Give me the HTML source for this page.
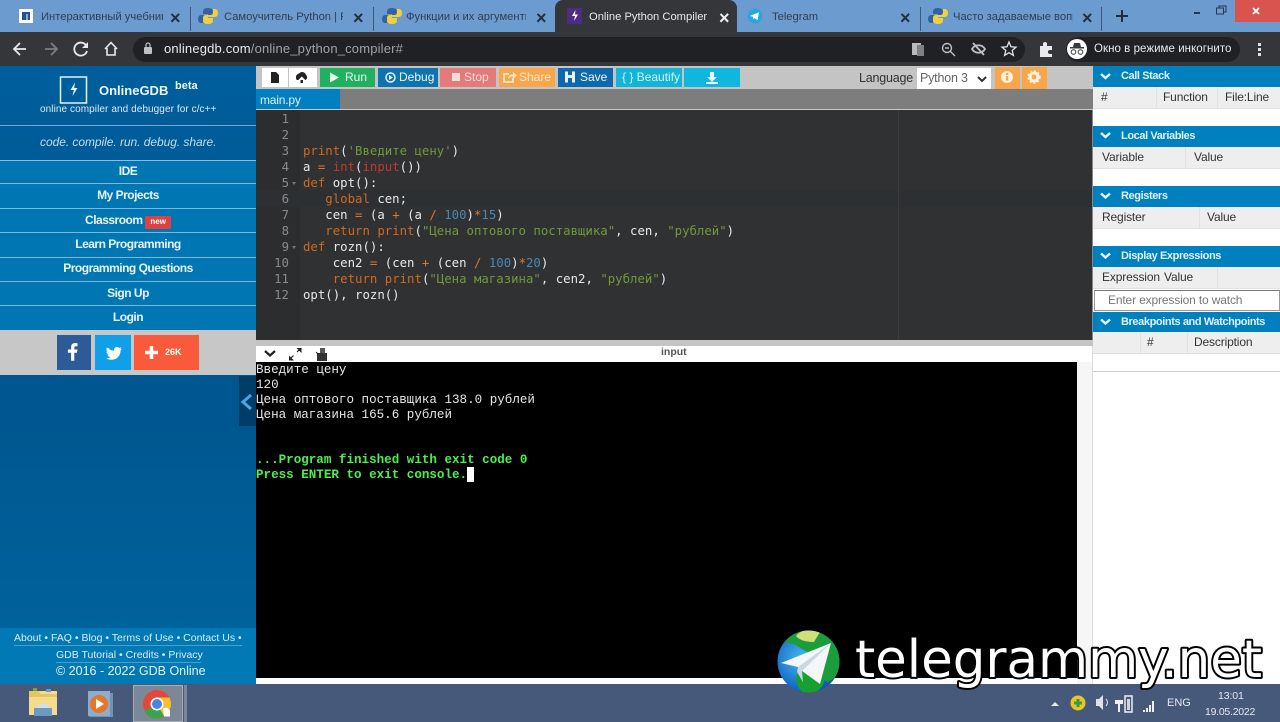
<!DOCTYPE html>
<html><head><meta charset="utf-8"><style>
html,body{margin:0;padding:0;width:1280px;height:722px;overflow:hidden;background:#fff;font-family:"Liberation Sans",sans-serif}
#r{position:relative;width:1280px;height:722px;overflow:hidden}
.b{position:absolute}
.t{position:absolute;white-space:pre;line-height:16px}
.tab{font-size:11.200px;color:#2f3f55;overflow:hidden}
.x{position:absolute;font-size:18px;font-weight:bold;color:#22303f;line-height:16px;width:10px;text-align:center}
.m{position:absolute;left:0;width:256px;background:#0077b3;border-bottom:1px solid #7fb5d5;color:#e8f3fa;font-size:12px;font-weight:bold;text-align:center;letter-spacing:-.5px}
.btn{position:absolute;top:68px;height:19px;color:#f2f2f2;font-size:12px;line-height:19px;white-space:pre}
.rh{position:absolute;left:1093px;width:187px;height:21px;background:#0080bf;color:#e2f0f8;font-size:11px;font-weight:bold;line-height:21px;letter-spacing:-.4px}
.rr{position:absolute;left:1093px;width:187px;height:21px;background:#eeeeee;border-bottom:1px solid #e0e0e0;color:#333;font-size:12px;line-height:21px;letter-spacing:-.15px}
.rr i{position:absolute;top:0;width:1px;height:21px;background:#e2e2e2}
.rr span,.rh span{position:absolute}
.code{position:absolute;left:303px;font:12.35px/16px "DejaVu Sans Mono","Noto Sans CJK SC",monospace;white-space:pre;color:#e8e8e8}
.n{position:absolute;left:256px;width:33px;text-align:right;font:12.35px/16px "DejaVu Sans Mono",monospace;color:#8a8c88}
.o{color:#d2691e}.r{color:#c03a2b}.g{color:#6f9a3a}.u{color:#4a87b5}.k{color:#e0762a}
.c{position:absolute;left:256px;font:12.57px/15px "Liberation Mono","DejaVu Sans Mono",monospace;white-space:pre;color:#e6e6e6}
.cg{color:#4cf04c;font-weight:bold}
</style></head><body><div id="r">

<!-- chrome tabs -->
<div class="b" style="left:0;top:0;width:1280px;height:32px;background:#6c9bd0"></div>
<div class="b" style="left:555px;top:0;width:182px;height:32px;background:#35363a;border-radius:8px 8px 0 0"></div>
<div class="b" style="left:190px;top:7px;width:1px;height:24px;background:#41597a"></div>
<div class="b" style="left:373px;top:7px;width:1px;height:24px;background:#41597a"></div>
<div class="b" style="left:920px;top:7px;width:1px;height:24px;background:#41597a"></div>
<div class="b" style="left:1101px;top:7px;width:1px;height:24px;background:#41597a"></div>

<svg class="b" style="left:0;top:0" width="1280" height="32">
<rect x="19" y="9" width="14" height="14" fill="#fff"/><path d="M22 12h8v8h-2.500v-6h-1v6H22z" fill="#23528f"/>
<g transform="translate(37 0)"><path d="M171 8c-4 0-5 1.500-5 4v2h5v1h-7c-2 0-3 2-3 4s1 4 3 4h2v-3c0-2 1-3 3-3h4c2 0 3-1 3-3v-2c0-3-2-4-5-4z" fill="#33639c"/><path d="M171 24c4 0 5-1.500 5-4v-2h-5v-1h7c2 0 3-2 3-4s-1-4-3-4h-2v3c0 2-1 3-3 3h-4c-2 0-3 1-3 3v2c0 3 2 4 5 4z" fill="#f2cf3f"/></g>
<g transform="translate(221 0)"><path d="M171 8c-4 0-5 1.500-5 4v2h5v1h-7c-2 0-3 2-3 4s1 4 3 4h2v-3c0-2 1-3 3-3h4c2 0 3-1 3-3v-2c0-3-2-4-5-4z" fill="#33639c"/><path d="M171 24c4 0 5-1.500 5-4v-2h-5v-1h7c2 0 3-2 3-4s-1-4-3-4h-2v3c0 2-1 3-3 3h-4c-2 0-3 1-3 3v2c0 3 2 4 5 4z" fill="#f2cf3f"/></g>
<g transform="translate(767 0)"><path d="M171 8c-4 0-5 1.500-5 4v2h5v1h-7c-2 0-3 2-3 4s1 4 3 4h2v-3c0-2 1-3 3-3h4c2 0 3-1 3-3v-2c0-3-2-4-5-4z" fill="#33639c"/><path d="M171 24c4 0 5-1.500 5-4v-2h-5v-1h7c2 0 3-2 3-4s-1-4-3-4h-2v3c0 2-1 3-3 3h-4c-2 0-3 1-3 3v2c0 3 2 4 5 4z" fill="#f2cf3f"/></g>
<rect x="567" y="8" width="15" height="16" fill="#4b2d83"/><path d="M575.500 10l-3.500 6h3l-1 5 4-6.500h-3z" fill="#fff"/>
<circle cx="755" cy="16" r="7.500" fill="#2aa6dc"/><path d="M750 16l9-3.800-1.500 8-3-2.200-1.200 1.300-.3-2.500z" fill="#fff"/>
<path d="M1116 16h12M1122 10v12" stroke="#1e2c40" stroke-width="2"/>
<path d="M1194 13h6" stroke="#26364c" stroke-width="2"/>
<rect x="1219" y="6" width="7" height="6" fill="none" stroke="#26364c"/><rect x="1216.500" y="8" width="7" height="6" fill="#6c9bd0" stroke="#26364c"/>
<rect x="1235" y="0" width="45" height="22" fill="#d9534f"/>
<path d="M1253 8l6 6M1259 8l-6 6" stroke="#fff" stroke-width="1.800"/>
</svg>
<div class="t tab" style="left:41px;top:9px;width:122px">Интерактивный учебник</div>
<div class="t tab" style="left:224px;top:9px;width:119px">Самоучитель Python | Python</div>
<div class="t tab" style="left:406px;top:9px;width:120px">Функции и их аргументы</div>
<div class="t" style="left:589px;top:9px;font-size:11.200px;color:#e6e8ea;width:120px;overflow:hidden">Online Python Compiler</div>
<div class="t tab" style="left:772px;top:9px">Telegram</div>
<div class="t tab" style="left:953px;top:9px;width:120px">Часто задаваемые вопросы</div>
<div class="x" style="left:170px;top:10px">×</div>
<div class="x" style="left:353px;top:10px">×</div>
<div class="x" style="left:536px;top:10px">×</div>
<div class="x" style="left:719px;top:10px;color:#eee">×</div>
<div class="x" style="left:900px;top:10px">×</div>
<div class="x" style="left:1082px;top:10px">×</div>

<!-- chrome toolbar -->
<div class="b" style="left:0;top:32px;width:1280px;height:34px;background:#35363a"></div>
<div class="b" style="left:133px;top:37px;width:892px;height:25px;background:#202124;border-radius:13px"></div>
<div class="b" style="left:1066px;top:37px;width:174px;height:25px;background:#202124;border-radius:13px"></div>
<svg class="b" style="left:0;top:32px" width="1280" height="34">
<path d="M26 17H15M20 11l-6 6 6 6" fill="none" stroke="#e8eaed" stroke-width="1.800"/>
<path d="M45 17h11M51 11l6 6-6 6" fill="none" stroke="#7c7e82" stroke-width="1.800"/>
<path d="M86.500 14a6.500 6.500 0 1 0 .5 5" fill="none" stroke="#e8eaed" stroke-width="1.800"/><path d="M88 10v6h-6z" fill="#e8eaed"/>
<path d="M105 17l6-6.500 6 6.500M107 16v7h8v-7" fill="none" stroke="#e8eaed" stroke-width="1.600"/>
<rect x="144" y="15" width="8" height="7" rx="1" fill="#bfc1c4"/><path d="M146 15v-2a2 2 0 0 1 4 0v2" fill="none" stroke="#bfc1c4" stroke-width="1.200"/>
<rect x="912" y="11" width="9" height="12" fill="#b9bbbe"/><rect x="917" y="13" width="7" height="11" fill="#7d8085"/>
<circle cx="947" cy="16" r="4.500" fill="none" stroke="#bfc1c4" stroke-width="1.400"/><path d="M950 19l5 5M945 16h4" stroke="#bfc1c4" stroke-width="1.400"/>
<path d="M972 17c3-5 10-5 13 0-3 5-10 5-13 0zM973 11l11 12" fill="none" stroke="#bfc1c4" stroke-width="1.800"/>
<path d="M1009 10l2 4.800 5 .4-3.800 3.200 1.200 5-4.400-2.700-4.400 2.700 1.200-5-3.800-3.200 5-.4z" fill="none" stroke="#e0e1e3" stroke-width="1.300"/>
<path d="M1040 14h3v-2a2 2 0 0 1 4 0v2h5v4h-2a2 2 0 0 0 0 4h2v3h-12z" fill="#e8eaed"/>
<circle cx="1077" cy="17" r="10" fill="#fff"/><path d="M1070 15h14v1.500h-14zM1073 15l1-4h6l1 4z" fill="#3a3b3f"/><circle cx="1073.500" cy="20" r="2.300" fill="none" stroke="#3a3b3f"/><circle cx="1080.500" cy="20" r="2.300" fill="none" stroke="#3a3b3f"/>
</svg>
<div class="t" style="left:164px;top:41px;font-size:13px;color:#e8eaed;letter-spacing:.17px">onlinegdb.com<span style="color:#a0a2a6">/online_python_compiler#</span></div>
<div class="t" style="left:1094px;top:41px;font-size:11.500px;color:#e8eaed;letter-spacing:.05px">Окно в режиме инкогнито</div>
<div class="b" style="left:1258px;top:43px;width:3px;height:3px;background:#dfe1e3"></div>
<div class="b" style="left:1258px;top:48px;width:3px;height:3px;background:#dfe1e3"></div>
<div class="b" style="left:1258px;top:53px;width:3px;height:3px;background:#dfe1e3"></div>

<!-- left sidebar -->
<div class="b" style="left:0;top:66px;width:256px;height:618px;background:linear-gradient(#005e9c,#00568f 55%,#00659f)"></div>
<svg class="b" style="left:0;top:66px" width="256" height="40">
<rect x="60.500" y="11" width="26" height="26" fill="none" stroke="#e6f0f7" stroke-width="1.500"/>
<path d="M75 16.500l-4.500 7.500h3.300l-1.300 6 5-8h-3.300z" fill="#e8f2f8"/>
</svg>
<div class="t" style="left:99px;top:83px;font-size:13px;font-weight:bold;color:#eef5fa">OnlineGDB</div>
<div class="t" style="left:175px;top:78px;font-size:11px;font-weight:bold;color:#eef5fa">beta</div>
<div class="t" style="left:40px;top:102px;font-size:10px;color:#dbe9f3;letter-spacing:.08px">online compiler and debugger for c/c++</div>
<div class="b" style="left:0;top:125px;width:256px;height:1px;background:#74a6c8"></div>
<div class="t" style="left:40px;top:134px;font-size:12px;font-style:italic;color:#c5dbe9;letter-spacing:-.05px">code. compile. run. debug. share.</div>
<div class="b" style="left:0;top:160px;width:256px;height:1px;background:#8fbcd8"></div>
<div class="m" style="top:161px;height:22px;line-height:20px">IDE</div>
<div class="m" style="top:184px;height:24px;line-height:23px">My Projects</div>
<div class="m" style="top:209px;height:23px;line-height:22px">Classroom <span style="display:inline-block;background:#df4141;color:#fff;font-size:8px;line-height:12px;height:13px;padding:0 5px;vertical-align:0;letter-spacing:0">new</span></div>
<div class="m" style="top:233px;height:24px;line-height:22px">Learn Programming</div>
<div class="m" style="top:258px;height:23px;line-height:21px">Programming Questions</div>
<div class="m" style="top:282px;height:23px;line-height:22px">Sign Up</div>
<div class="m" style="top:306px;height:24px;line-height:22px;border-bottom:0">Login</div>
<div class="b" style="left:0;top:330px;width:256px;height:45px;background:#c7c7c7"></div>
<div class="b" style="left:57px;top:335px;width:34px;height:35px;background:#2d5b98"></div>
<div class="b" style="left:95px;top:335px;width:36px;height:35px;background:#10a0ea"></div>
<div class="b" style="left:134px;top:335px;width:65px;height:35px;background:#fa5a3c"></div>
<svg class="b" style="left:57px;top:335px" width="142" height="35">
<path transform="translate(.5 3.300) scale(.8)" d="M17 28V18h-4v-4h4v-3c0-3.500 2-5 5-5h3v4h-2c-1.500 0-2 .7-2 2v2h4l-.7 4H21v10z" fill="#fff"/>
<path transform="translate(22.200 6) scale(.62)" d="M47 11c2.500 3 5.500 4.500 9 4.700-.5-3.500 2-6 5-6 1.400 0 2.700.6 3.500 1.500l3.500-1.200-1.800 3.300 2.800-.8-2.300 2.800c0 9-6.500 15-15 15-3 0-6-.8-8.500-2.400 2.700.2 5.300-.5 7.300-2.100-2.300 0-4.200-1.500-4.800-3.500h2.400c-2.500-.6-4.200-2.800-4.200-5.300.7.400 1.500.6 2.300.7-2.300-1.600-3-4.700-1.500-7z" fill="#fff"/>
<path d="M88 17.500h13M94.500 11v13" stroke="#fff" stroke-width="3.500"/>
</svg>
<div class="t" style="left:165px;top:345px;font-size:9px;font-weight:bold;color:#ffe;line-height:14px">26K</div>
<div class="b" style="left:239px;top:376px;width:17px;height:50px;background:#003c68"></div>
<svg class="b" style="left:239px;top:376px" width="17" height="50"><path d="M12 19l-8 7 8 7" fill="none" stroke="#4aa5e0" stroke-width="3"/></svg>

<div class="b" style="left:0;top:628px;width:256px;height:56px;background:#0079b5"></div>
<div class="t" style="left:14px;top:630px;font-size:10.500px;color:#dcecf6">About • FAQ • Blog • Terms of Use • Contact Us •</div>
<div class="b" style="left:14px;top:645px;width:228px;height:1px;background:#4aa0cd"></div>
<div class="t" style="left:56px;top:647px;font-size:10.500px;color:#dcecf6">GDB Tutorial • Credits • Privacy</div>
<div class="b" style="left:56px;top:662px;width:145px;height:1px;background:#4aa0cd"></div>
<div class="t" style="left:56px;top:663px;font-size:12.500px;color:#e8f3fa">© 2016 - 2022 GDB Online</div>

<!-- ide toolbar -->
<div class="b" style="left:256px;top:66px;width:837px;height:23px;background:#c4c4c4"></div>
<div class="b" style="left:262px;top:68px;width:26px;height:19px;background:#fff"></div>
<div class="b" style="left:289px;top:68px;width:28px;height:19px;background:#fff"></div>
<svg class="b" style="left:262px;top:68px" width="56" height="19">
<path d="M9 4h5l3 3v8H9z" fill="#222"/>
<path d="M34 9.500a3.500 3.500 0 0 1 3-4 4 4 0 0 1 7 1.500 3 3 0 0 1-.5 5H41v3h-2.500v-3H35a2.500 2.500 0 0 1-1-2.500z" fill="#222"/><path d="M39.800 8.500l-3.500 3.500h7z" fill="#fff"/>
</svg>
<div class="btn" style="left:320px;width:55px;background:#1fb160"><span style="position:absolute;left:25px;color:#f0f8f2">Run</span></div>
<svg class="b" style="left:320px;top:68px" width="24" height="19"><path d="M10 4.500l9 5-9 5z" fill="#eef8f0"/></svg>
<div class="btn" style="left:378px;width:60px;background:#0c74ae"><span style="position:absolute;left:21px">Debug</span></div>
<svg class="b" style="left:378px;top:68px" width="20" height="19"><circle cx="12.500" cy="9.500" r="4.500" fill="none" stroke="#eef" stroke-width="1.500"/><path d="M11 7l4 2.500-4 2.500z" fill="#eef"/></svg>
<div class="btn" style="left:440px;width:56px;background:#e47b7b"><span style="position:absolute;left:24px;color:#f6dcdc">Stop</span></div>
<div class="b" style="left:452px;top:73px;width:8px;height:8px;background:#f6dcdc"></div>
<div class="btn" style="left:499px;width:56px;background:#f8a64a"><span style="position:absolute;left:20px;color:#fde9d0">Share</span></div>
<svg class="b" style="left:499px;top:68px" width="20" height="19"><path d="M14 10v4H5V6h5" fill="none" stroke="#fde9d0" stroke-width="1.700"/><path d="M9 11c0-3 2-4.500 5-4.500V4l4 3.500-4 3.500V8.500c-2 0-3.500.7-5 2.500z" fill="#fde9d0"/></svg>
<div class="btn" style="left:558px;width:55px;background:#0c69ab"><span style="position:absolute;left:22px">Save</span></div>
<svg class="b" style="left:558px;top:68px" width="20" height="19"><path d="M7 3.500h10v11H7z" fill="#eef"/><rect x="10" y="3.500" width="4" height="3.500" fill="#0c69ab"/><rect x="10" y="10" width="4" height="4.500" fill="#0c69ab"/></svg>
<div class="btn" style="left:616px;width:66px;background:#12b5d8"><span style="position:absolute;left:6px;color:#d6f2f8">{ } Beautify</span></div>
<div class="btn" style="left:684px;width:56px;background:#0fb6de"></div>
<svg class="b" style="left:684px;top:68px" width="56" height="19"><path d="M26 4h4v5h3l-5 5-5-5h3zM22 14h12v2H22z" fill="#e8f7fb"/></svg>
<div class="t" style="left:859px;top:70px;font-size:12.500px;color:#333;letter-spacing:-.2px">Language</div>
<div class="b" style="left:917px;top:68px;width:74px;height:21px;background:#fff"></div>
<div class="t" style="left:920px;top:70px;font-size:12.500px;color:#666;letter-spacing:-.2px">Python 3</div>
<svg class="b" style="left:975px;top:72px" width="14" height="14"><path d="M3 5l4 4 4-4" fill="none" stroke="#333" stroke-width="2"/></svg>
<div class="b" style="left:995px;top:67px;width:25px;height:22px;background:#f8a64a"></div>
<div class="b" style="left:1022px;top:67px;width:25px;height:22px;background:#f8a64a"></div>
<svg class="b" style="left:995px;top:67px" width="52" height="22"><circle cx="12" cy="10" r="6" fill="#fdf0dc"/><rect x="11" y="9" width="2.200" height="4.500" fill="#f8a64a"/><rect x="11" y="6" width="2.200" height="2" fill="#f8a64a"/><circle cx="39" cy="10" r="4" fill="none" stroke="#fdf0dc" stroke-width="3"/><circle cx="39" cy="10" r="6" fill="none" stroke="#fdf0dc" stroke-width="1.500" stroke-dasharray="2 2"/></svg>

<!-- tab row -->
<div class="b" style="left:256px;top:89px;width:837px;height:21px;background:#7d7d7d"></div>
<div class="b" style="left:256px;top:109px;width:837px;height:1px;background:#c9c9c9"></div>
<div class="b" style="left:256px;top:89px;width:84px;height:20px;background:#0080c0"></div>
<div class="t" style="left:260px;top:92px;font-size:12px;color:#dceef8;letter-spacing:-.2px">main.py</div>

<!-- editor -->
<div class="b" style="left:256px;top:110px;width:837px;height:230px;background:#2f3133"></div>
<div class="b" style="left:256px;top:110px;width:44px;height:230px;background:#2b2d2f"></div>
<div class="b" style="left:256px;top:191px;width:837px;height:16px;background:#2d3033"></div>
<div class="b" style="left:898px;top:110px;width:1px;height:230px;background:#3a3c3e"></div>
<div class="b" style="left:1092px;top:110px;width:1px;height:236px;background:#888"></div>
<div class="n" style="top:111px">1</div><div class="n" style="top:127px">2</div><div class="n" style="top:143px">3</div><div class="n" style="top:159px">4</div><div class="n" style="top:175px">5</div><div class="n" style="top:191px">6</div><div class="n" style="top:207px">7</div><div class="n" style="top:223px">8</div><div class="n" style="top:239px">9</div><div class="n" style="top:255px">10</div><div class="n" style="top:271px">11</div><div class="n" style="top:287px">12</div>
<div class="b" style="left:292px;top:182px;border:2.500px solid transparent;border-top:3px solid #777"></div>
<div class="b" style="left:292px;top:246px;border:2.500px solid transparent;border-top:3px solid #777"></div>
<div class="code" style="top:143px"><span class="o">print</span>(<span class="g">'Введите цену'</span>)</div>
<div class="code" style="top:159px">a <span class="k">=</span> <span class="r">int</span>(<span class="r">input</span>())</div>
<div class="code" style="top:175px"><span class="o">def</span> opt():</div>
<div class="code" style="top:191px">   <span class="o">global</span> cen;</div>
<div class="code" style="top:207px">   cen <span class="k">=</span> (a <span class="k">+</span> (a <span class="k">/</span> <span class="u">100</span>)<span class="k">*</span><span class="u">15</span>)</div>
<div class="code" style="top:223px">   <span class="o">return</span> <span class="o">print</span>(<span class="g">"Цена оптового поставщика"</span>, cen, <span class="g">"рублей"</span>)</div>
<div class="code" style="top:239px"><span class="o">def</span> rozn():</div>
<div class="code" style="top:255px">    cen2 <span class="k">=</span> (cen <span class="k">+</span> (cen <span class="k">/</span> <span class="u">100</span>)<span class="k">*</span><span class="u">20</span>)</div>
<div class="code" style="top:271px">    <span class="o">return</span> <span class="o">print</span>(<span class="g">"Цена магазина"</span>, cen2, <span class="g">"рублей"</span>)</div>
<div class="code" style="top:287px">opt(), rozn()</div>

<!-- console -->
<div class="b" style="left:256px;top:340px;width:837px;height:6px;background:#c4c4c4"></div>
<div class="b" style="left:256px;top:346px;width:837px;height:16px;background:#fff"></div>
<svg class="b" style="left:256px;top:346px" width="80" height="16">
<path d="M9 5l5 4.500L19 5" fill="none" stroke="#222" stroke-width="2.200"/>
<path d="M34 13l3.500-3.500M41 6l3.500-3.500" stroke="#222" stroke-width="1.200"/><path d="M33 9.500v5h5zM45.500 7V2h-5z" fill="#222"/>
<rect x="61" y="7" width="10" height="8" fill="#333"/><rect x="64" y="2" width="5" height="5" fill="#555"/><path d="M60 6l3 3" stroke="#222"/>
</svg>
<div class="t" style="left:661px;top:344px;font-size:10.500px;font-weight:bold;color:#555">input</div>
<div class="b" style="left:256px;top:362px;width:821px;height:316px;background:#000"></div>
<div class="b" style="left:1077px;top:362px;width:15px;height:322px;background:#f6f6f6"></div>
<div class="b" style="left:1092px;top:346px;width:1px;height:338px;background:#ddd"></div>
<div class="c" style="top:363px">Введите цену</div>
<div class="c" style="top:378px">120</div>
<div class="c" style="top:393px">Цена оптового поставщика 138.0 рублей</div>
<div class="c" style="top:408px">Цена магазина 165.6 рублей</div>
<div class="c cg" style="top:453px">...Program finished with exit code 0</div>
<div class="c cg" style="top:468px">Press ENTER to exit console.</div>
<div class="b" style="left:467px;top:467px;width:7px;height:15px;background:#fff"></div>

<!-- right panel -->
<div class="rh" style="top:66px"><span style="left:28px">Call Stack</span></div>
<div class="rr" style="top:87px"><span style="left:8px">#</span><span style="left:70px">Function</span><span style="left:132px">File:Line</span><i style="left:63px"></i><i style="left:124px"></i></div>
<div class="rh" style="top:126px"><span style="left:28px">Local Variables</span></div>
<div class="rr" style="top:147px"><span style="left:9px">Variable</span><span style="left:101px">Value</span><i style="left:92px"></i></div>
<div class="rh" style="top:186px"><span style="left:28px">Registers</span></div>
<div class="rr" style="top:207px"><span style="left:9px">Register</span><span style="left:114px">Value</span><i style="left:106px"></i></div>
<div class="rh" style="top:246px"><span style="left:28px">Display Expressions</span></div>
<div class="rr" style="top:267px"><span style="left:9px">Expression</span><span style="left:71px">Value</span><i style="left:124px"></i></div>
<div class="b" style="left:1094px;top:290px;width:184px;height:19px;background:#fff;border:1px solid #999;border-top-color:#777"></div>
<div class="t" style="left:1108px;top:292px;font-size:12px;color:#777;letter-spacing:-.15px">Enter expression to watch</div>
<div class="rh" style="top:312px"><span style="left:28px">Breakpoints and Watchpoints</span></div>
<div class="rr" style="top:332px"><span style="left:54px">#</span><span style="left:101px">Description</span><i style="left:47px"></i><i style="left:94px"></i></div>
<div class="b" style="left:1093px;top:371px;width:187px;height:1px;background:#ccc"></div>
<svg class="b" style="left:1093px;top:66px" width="30" height="270">
<g fill="none" stroke="#e8f3fa" stroke-width="2.500"><path d="M8 8l4.500 4 4.500-4"/><path d="M8 67l4.500 4 4.500-4"/><path d="M8 127.500l4.500 4 4.500-4"/><path d="M8 187.500l4.500 4 4.500-4"/><path d="M8 253.500l4.500 4 4.500-4"/></g>
</svg>

<!-- taskbar -->
<div class="b" style="left:0;top:684px;width:1280px;height:38px;background:#47597b"></div>
<div class="b" style="left:133px;top:685px;width:50px;height:37px;background:#7c8797;border:1px solid #a5adb9;box-sizing:border-box"></div>
<div class="b" style="left:184px;top:685px;width:3px;height:37px;background:#7c8797"></div>
<svg class="b" style="left:0;top:684px" width="190" height="38">
<path d="M29 7h28v24H29z" fill="#f3dc8c"/><path d="M29 7h9l3 3h16v3H29z" fill="#e6c463"/><rect x="33" y="4" width="4" height="3" fill="#6aa84f"/><rect x="46" y="5" width="5" height="3" fill="#5a9fd4"/><path d="M34 32v-8h18v8" fill="#6b9ac4"/><rect x="38" y="20" width="10" height="4" fill="#cfe0ee"/>
<rect x="89" y="9" width="24" height="24" fill="#6e93bb"/><rect x="88" y="7" width="22" height="25" fill="#8eaccc"/><circle cx="99" cy="20" r="9" fill="#e5762a"/><path d="M96 15l8 5-8 5z" fill="#fff"/>
<circle cx="157" cy="20" r="14" fill="#e4463b"/><path d="M157 20L144 27a14 14 0 0 0 20 5.500z" fill="#3ca34c"/><path d="M157 6a14 14 0 0 1 14 14 14 14 0 0 1-7 12L157 20z" fill="#f2c230"/><path d="M157 6a14 14 0 0 1 12.500 7.500H157z" fill="#e4463b"/><circle cx="157" cy="20" r="6.500" fill="#fff"/><circle cx="157" cy="20" r="5" fill="#4a83e0"/><path d="M163 24l4-.5 3 3v6h-6z" fill="#fff"/>
</svg>
<svg class="b" style="left:1045px;top:684px" width="130" height="38">
<path d="M6 22l4-4 4 4z" fill="#e6e8ec"/>
<circle cx="33" cy="19" r="7.500" fill="#e8c62a"/><path d="M33 15v8M29 19h8" stroke="#3d9a3a" stroke-width="3"/>
<path d="M51 15h3l4-4v15l-4-4h-3z" fill="#dfe3e8"/><path d="M61 15a5 5 0 0 1 0 7" fill="none" stroke="#dfe3e8"/>
<path d="M72 12v4M76 12v4M70 16h8v4h-3v8h-2v-8h-3z" fill="#eef0f3"/><rect x="80" y="12" width="7" height="16" fill="none" stroke="#eef0f3" stroke-width="1.500"/><rect x="82" y="15" width="3" height="11" fill="#cfd5dc"/>
<rect x="98" y="26" width="2" height="2" fill="#eef0f3"/><rect x="101" y="24" width="2" height="4" fill="#eef0f3"/><rect x="104" y="21" width="2" height="7" fill="#eef0f3"/><rect x="107" y="17" width="2" height="11" fill="#eef0f3"/></svg>
<div class="t" style="left:1167px;top:695px;font-size:11px;color:#e4e8ee">ENG</div>
<div class="t" style="left:1218px;top:688px;font-size:10.500px;color:#e4e8ee;letter-spacing:-.1px">13:01</div>
<div class="t" style="left:1205px;top:704px;font-size:10.500px;color:#e4e8ee;letter-spacing:-.25px">19.05.2022</div>

<!-- watermark -->
<svg class="b" style="left:770px;top:620px" width="510" height="102">
<defs>
<radialGradient id="gl" cx=".4" cy=".45" r=".65"><stop offset="0" stop-color="#4db8ea"/><stop offset=".7" stop-color="#1670cc"/><stop offset="1" stop-color="#0b4aa0"/></radialGradient>
<clipPath id="cp"><circle cx="38.500" cy="41.500" r="31"/></clipPath>
</defs>
<circle cx="38.500" cy="41.500" r="31" fill="url(#gl)"/>
<g clip-path="url(#cp)">
<path d="M14 22C20 8 40 6 52 12c10 6 20 18 20 30 0 8-6 16-14 20-8-2-6-14-8-22L24 24z" fill="#1c9d3b"/>
<path d="M26 16c6-8 18-7 24-4l-6 10c-6 0-14-1-18-6z" fill="#cfe07a"/>
<path d="M26 58c2-8 8-14 14-14 6 2 12 6 14 14s-8 16-16 16-12-10-12-16z" fill="#17a02f"/>
</g>
<path d="M11 43L61 23 50 64 32 51 28 47z" fill="#f4f7fa"/>
<path d="M28 47L61 23 32 51l1 11-6-10z" fill="#cdd7e2"/>
<text x="85" y="57" font-family="DejaVu Sans,Liberation Sans,sans-serif" font-size="52" textLength="407" lengthAdjust="spacingAndGlyphs" fill="#fff" stroke="#000" stroke-width="4" paint-order="stroke" stroke-linejoin="round">telegrammy.net</text>
</svg>
</div></body></html>
